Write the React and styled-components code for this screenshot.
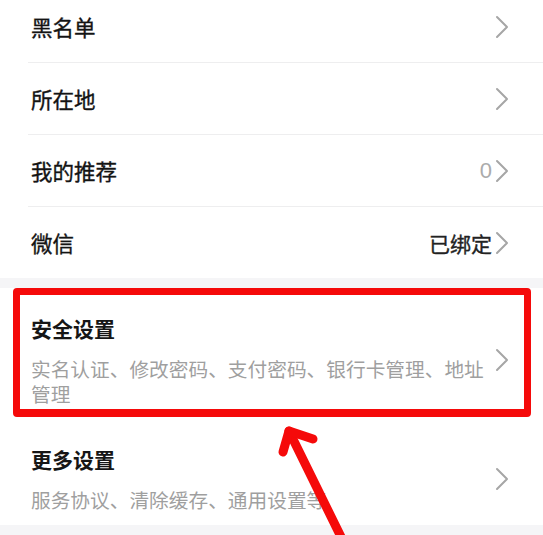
import React from 'react';
import styled, { createGlobalStyle } from 'styled-components';

const GlobalStyle = createGlobalStyle`
  html, body {
    margin: 0;
    padding: 0;
    background: #ffffff;
  }
  body {
    font-family: "Noto Sans CJK SC", "Noto Sans", sans-serif;
    overflow: hidden;
  }
`;

const Page = styled.div`
  position: relative;
  width: 543px;
  height: 535px;
  overflow: hidden;
  background: #ffffff;
`;

const List = styled.div`
  margin-top: -9px;
`;

const Row = styled.div`
  display: flex;
  align-items: center;
  height: 71px;
  padding: 0 34px 0 31px;
  position: relative;
  &:not(:last-child)::after {
    content: '';
    position: absolute;
    left: 28px;
    right: 0;
    bottom: -1px;
    height: 1px;
    background: #eeeeef;
  }
  & + & {
    margin-top: 1px;
  }
`;

const Label = styled.div`
  flex: 1;
  font-size: 21.5px;
  line-height: 28px;
  color: #141414;
  -webkit-text-stroke: 0.35px #141414;
`;

const Value = styled.span`
  font-size: ${(p) => (p.$muted ? '22px' : '21px')};
  color: ${(p) => (p.$muted ? '#ababab' : '#222222')};
  margin-right: 3px;
  font-family: ${(p) => (p.$muted ? '"Liberation Sans", sans-serif' : 'inherit')};
  -webkit-text-stroke: ${(p) => (p.$muted ? '0' : '0.35px #222222')};
`;

const Gap = styled.div`
  height: ${(p) => p.$h}px;
  background: #f5f5f7;
`;

const Block = styled.div`
  position: relative;
  display: flex;
  align-items: center;
  padding: ${(p) => p.$pad};
  padding-left: 31px;
  padding-right: 34px;
`;

const TextCol = styled.div`
  flex: 1;
  min-width: 0;
`;

const Title = styled.div`
  font-size: 21px;
  line-height: 28px;
  font-weight: 700;
  color: #161616;
`;

const Sub = styled.div`
  margin-top: 14px;
  font-size: 19.7px;
  line-height: 25px;
  color: #9f9f9f;
`;

const Highlight = styled.div`
  position: absolute;
  top: 0;
  left: 13px;
  right: 12px;
  bottom: 2px;
  border: 7px solid #f50a0a;
  border-bottom-width: 8px;
  border-radius: 4px;
  pointer-events: none;
`;

const ArrowLayer = styled.svg`
  position: absolute;
  left: 0;
  top: 0;
  width: 543px;
  height: 535px;
  pointer-events: none;
`;

const Chevron = () => (
  <svg width="14" height="24" viewBox="0 0 14 24" style={{ flexShrink: 0 }}>
    <path d="M2 2 L12 12 L2 22" fill="none" stroke="#a6a6a6" strokeWidth="2" strokeLinecap="round" strokeLinejoin="round" />
  </svg>
);

const rows = [
  { label: '黑名单' },
  { label: '所在地' },
  { label: '我的推荐', value: '0', muted: true },
  { label: '微信', value: '已绑定' },
];

export default function App() {
  return (
    <>
      <GlobalStyle />
      <Page>
        <List>
          {rows.map((r) => (
            <Row key={r.label}>
              <Label>{r.label}</Label>
              {r.value && <Value $muted={r.muted}>{r.value}</Value>}
              <Chevron />
            </Row>
          ))}
        </List>
        <Gap $h={10} />
        <Block $pad="26px 0 13px">
          <TextCol>
            <Title>安全设置</Title>
            <Sub>实名认证、修改密码、支付密码、银行卡管理、地址管理</Sub>
          </TextCol>
          <Chevron />
          <Highlight />
        </Block>
        <Block $pad="26px 0 13px">
          <TextCol>
            <Title>更多设置</Title>
            <Sub>服务协议、清除缓存、通用设置等</Sub>
          </TextCol>
          <Chevron />
        </Block>
        <Gap $h={12} />
        <ArrowLayer viewBox="0 0 543 535">
          <g fill="none" stroke="#f50a0a" strokeWidth="9" strokeLinecap="round" strokeLinejoin="round">
            <path d="M289 431 L345 545" />
            <path d="M283 452 L289 431 L313 439" />
          </g>
        </ArrowLayer>
      </Page>
    </>
  );
}
